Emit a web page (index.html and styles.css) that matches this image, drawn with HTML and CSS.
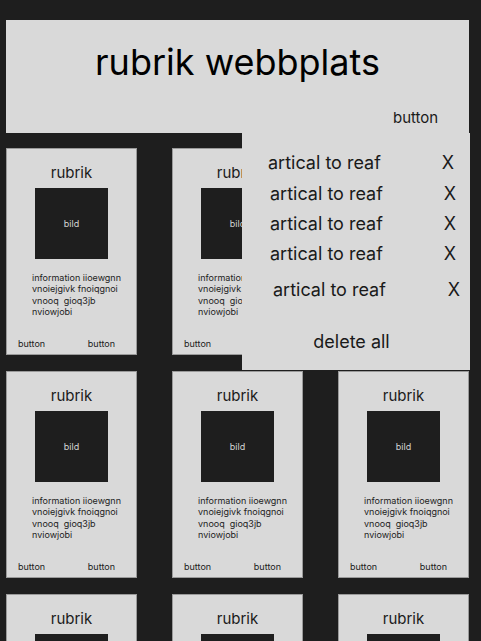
FILE: index.html
```html
<!DOCTYPE html>
<html lang="sv">

<head>
  <meta charset="UTF-8">
  <meta name="viewport" content="width=device-width, initial-scale=1.0">
  <title>rubrik webbplats</title>
  <link rel="stylesheet" href="styles.css">
</head>

<body>
  <div class="page">
    <header class="site-header">
      <h1>rubrik webbplats</h1>
      <div class="header-button">button</div>

      <div class="read-list">
        <div class="read-item">
          <span>artical to reaf</span>
          <span class="remove">X</span>
        </div>
        <div class="read-item">
          <span>artical to reaf</span>
          <span class="remove">X</span>
        </div>
        <div class="read-item">
          <span>artical to reaf</span>
          <span class="remove">X</span>
        </div>
        <div class="read-item">
          <span>artical to reaf</span>
          <span class="remove">X</span>
        </div>
        <div class="read-item last">
          <span>artical to reaf</span>
          <span class="remove">X</span>
        </div>
        <div class="delete-all">delete all</div>
      </div>
    </header>

    <main class="cards">
      <div class="card">
        <h2>rubrik</h2>
        <div class="picture">bild</div>
        <p class="info">information iioewgnn vnoiejgivk fnoiqgnoi vnooq&nbsp; gioq3jb nviowjobi</p>
        <div class="card-buttons">
          <span>button</span>
          <span>button</span>
        </div>
      </div>
      <div class="card">
        <h2>rubrik</h2>
        <div class="picture">bild</div>
        <p class="info">information iioewgnn vnoiejgivk fnoiqgnoi vnooq&nbsp; gioq3jb nviowjobi</p>
        <div class="card-buttons">
          <span>button</span>
          <span>button</span>
        </div>
      </div>
      <div class="card">
        <h2>rubrik</h2>
        <div class="picture">bild</div>
        <p class="info">information iioewgnn vnoiejgivk fnoiqgnoi vnooq&nbsp; gioq3jb nviowjobi</p>
        <div class="card-buttons">
          <span>button</span>
          <span>button</span>
        </div>
      </div>
      <div class="card">
        <h2>rubrik</h2>
        <div class="picture">bild</div>
        <p class="info">information iioewgnn vnoiejgivk fnoiqgnoi vnooq&nbsp; gioq3jb nviowjobi</p>
        <div class="card-buttons">
          <span>button</span>
          <span>button</span>
        </div>
      </div>
      <div class="card">
        <h2>rubrik</h2>
        <div class="picture">bild</div>
        <p class="info">information iioewgnn vnoiejgivk fnoiqgnoi vnooq&nbsp; gioq3jb nviowjobi</p>
        <div class="card-buttons">
          <span>button</span>
          <span>button</span>
        </div>
      </div>
      <div class="card">
        <h2>rubrik</h2>
        <div class="picture">bild</div>
        <p class="info">information iioewgnn vnoiejgivk fnoiqgnoi vnooq&nbsp; gioq3jb nviowjobi</p>
        <div class="card-buttons">
          <span>button</span>
          <span>button</span>
        </div>
      </div>
      <div class="card">
        <h2>rubrik</h2>
        <div class="picture">bild</div>
        <p class="info">information iioewgnn vnoiejgivk fnoiqgnoi vnooq&nbsp; gioq3jb nviowjobi</p>
        <div class="card-buttons">
          <span>button</span>
          <span>button</span>
        </div>
      </div>
      <div class="card">
        <h2>rubrik</h2>
        <div class="picture">bild</div>
        <p class="info">information iioewgnn vnoiejgivk fnoiqgnoi vnooq&nbsp; gioq3jb nviowjobi</p>
        <div class="card-buttons">
          <span>button</span>
          <span>button</span>
        </div>
      </div>
      <div class="card">
        <h2>rubrik</h2>
        <div class="picture">bild</div>
        <p class="info">information iioewgnn vnoiejgivk fnoiqgnoi vnooq&nbsp; gioq3jb nviowjobi</p>
        <div class="card-buttons">
          <span>button</span>
          <span>button</span>
        </div>
      </div>
    </main>
  </div>
</body>

</html>
```

FILE: styles.css
```css
:root {
  --dark: #1e1e1e;
  --light: #d9d9d9;
  --text: #1a1a1a;
  --edge: #9a9a9a;
}

* {
  margin: 0;
  padding: 0;
  box-sizing: border-box;
  font-family: 'Inter', 'Liberation Sans', sans-serif;
}

html {
  overflow: hidden;
}

body {
  background: var(--dark);
  color: var(--text);
}

.page {
  padding: 20px 11px 0 6px;
}

/* Header */
.site-header {
  position: relative;
  height: 113px;
  width: 463px;
  background: var(--light);
}

.site-header h1 {
  font-size: 36px;
  font-weight: 400;
  line-height: 44px;
  text-align: center;
  padding-top: 20px;
  color: #000;
}

.header-button {
  font-size: 15px;
  line-height: 18px;
  margin: 25px 0 0 387px;
}

/* Reading list dropdown */
.read-list {
  position: absolute;
  top: 113px;
  left: 236px;
  width: 228px;
  height: 237px;
  background: var(--light);
  padding-top: 14px;
  z-index: 2;
}

.read-item {
  display: flex;
  justify-content: space-between;
  align-items: center;
  height: 30px;
  padding: 0 14px 0 28px;
  font-size: 18px;
}

.read-item:first-child {
  padding-left: 26px;
  padding-right: 16px;
  margin-bottom: 1px;
}

.read-item.last {
  margin-top: 6px;
  padding-left: 31px;
  padding-right: 10px;
}

.delete-all {
  font-size: 18px;
  text-align: center;
  padding-right: 9px;
  margin-top: 27px;
}

/* Cards */
.cards {
  display: grid;
  grid-template-columns: repeat(3, 131px);
  grid-auto-rows: 207px;
  column-gap: 35px;
  row-gap: 16px;
  margin-top: 15px;
}

.card {
  display: flex;
  flex-direction: column;
  align-items: center;
  background: var(--light);
  border: 1px solid var(--edge);
}

.card h2 {
  font-size: 15px;
  font-weight: 400;
  line-height: 18px;
  margin-top: 15px;
}

.picture {
  display: flex;
  align-items: center;
  justify-content: center;
  width: 73px;
  height: 71px;
  margin-top: 6px;
  background: var(--dark);
  color: #d4d4d4;
  font-size: 9px;
}

.info {
  align-self: stretch;
  padding: 0 10px 0 25px;
  margin-top: 13px;
  font-size: 9px;
  line-height: 11.4px;
  color: #222;
}

.card-buttons {
  display: flex;
  justify-content: space-between;
  align-self: stretch;
  margin-top: auto;
  padding: 0 21px 5px 11px;
  font-size: 9px;
  line-height: 11px;
}
```
